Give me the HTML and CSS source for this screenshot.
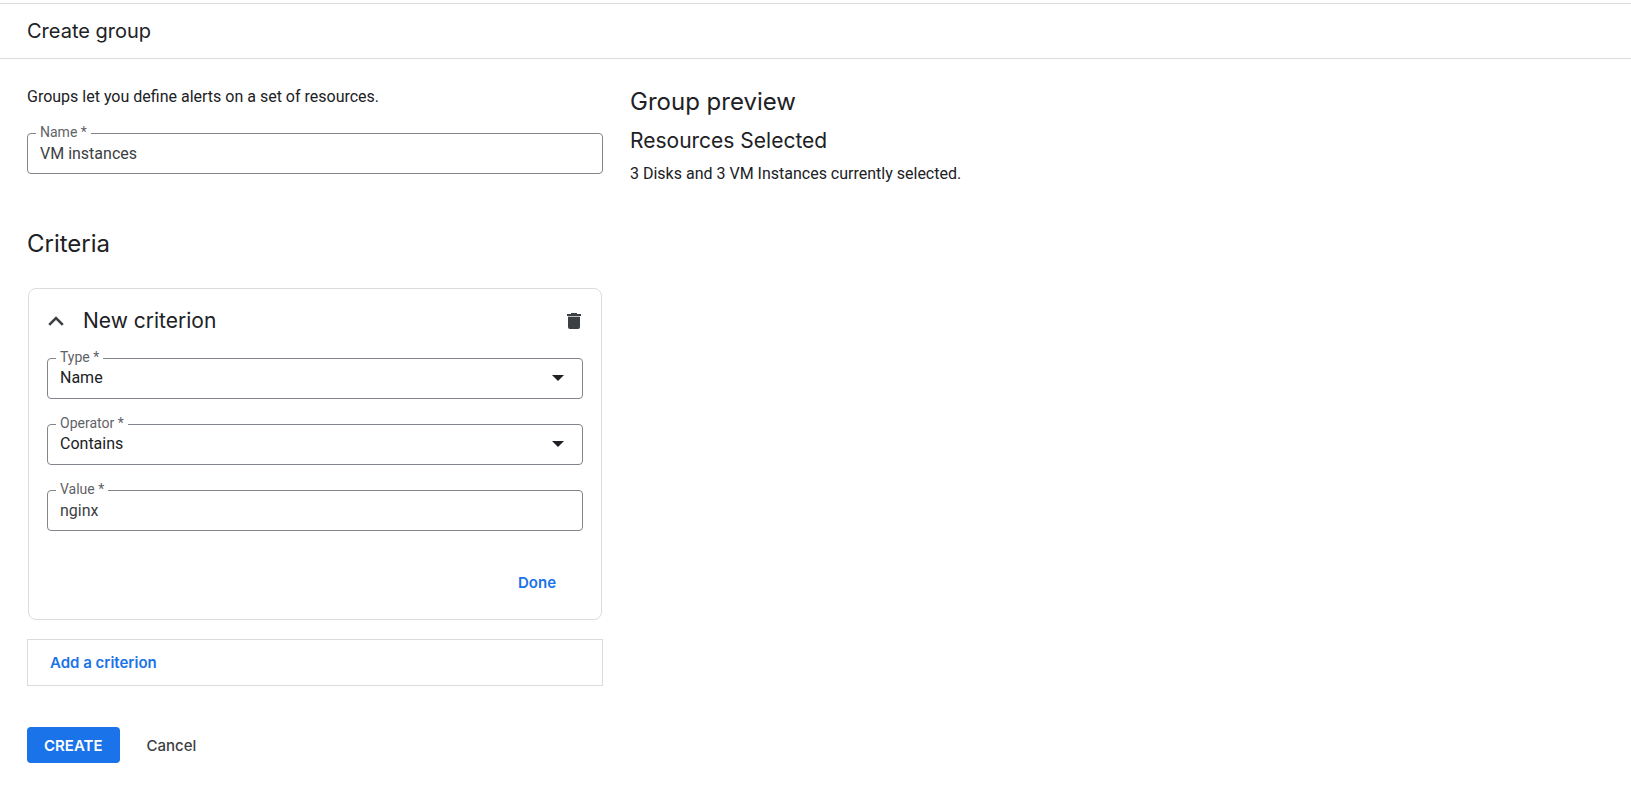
FILE: index.html
```html
<!DOCTYPE html>
<html lang="en">
<head>
<meta charset="utf-8">
<meta name="viewport" content="width=device-width, initial-scale=1">
<title>Create group</title>
<link rel="stylesheet" href="styles.css">
</head>
<body>
<header class="page-header">
  <h1 class="page-title">Create group</h1>
</header>
<main class="layout">
  <form class="group-form">
    <p class="text">Groups let you define alerts on a set of resources.</p>
    <div class="field field-name">
      <label class="field-label" for="name">Name *</label>
      <input class="field-control" id="name" type="text" value="VM instances">
    </div>
    <h2 class="heading heading-criteria">Criteria</h2>
    <section class="card">
      <div class="card-header">
        <button class="icon-button" type="button" aria-label="Collapse">
          <svg width="18" height="18" viewBox="0 0 18 18"><path d="M2.2 12.8 9 6l6.8 6.8" fill="none" stroke="#3c4043" stroke-width="2.6"/></svg>
        </button>
        <h3 class="subheading card-title">New criterion</h3>
        <button class="icon-button" type="button" aria-label="Delete">
          <svg width="18" height="18" viewBox="0 0 18 18"><path d="M6 1h6v1h4v2H2V2h4z" fill="#3c4043"/><path d="M3 4h12v1H3z" fill="#bdc1c6"/><path d="M3 5h12v10a2 2 0 0 1-2 2H5a2 2 0 0 1-2-2z" fill="#3c4043"/></svg>
        </button>
      </div>
      <div class="fields">
        <div class="field">
          <label class="field-label" for="type">Type *</label>
          <select class="field-control field-select" id="type"><option>Name</option></select>
          <svg class="field-arrow" width="12" height="6" viewBox="0 0 12 6"><path d="M0 0h12L6 6z" fill="#202124"/></svg>
        </div>
        <div class="field">
          <label class="field-label" for="operator">Operator *</label>
          <select class="field-control field-select" id="operator"><option>Contains</option></select>
          <svg class="field-arrow" width="12" height="6" viewBox="0 0 12 6"><path d="M0 0h12L6 6z" fill="#202124"/></svg>
        </div>
        <div class="field">
          <label class="field-label" for="value">Value *</label>
          <input class="field-control" id="value" type="text" value="nginx">
        </div>
      </div>
      <div class="card-actions">
        <button class="button button-link" type="button">Done</button>
      </div>
    </section>
    <button class="button add-button" type="button">Add a criterion</button>
    <div class="form-actions">
      <button class="button button-primary" type="submit">CREATE</button>
      <button class="button button-plain" type="button">Cancel</button>
    </div>
  </form>
  <aside class="preview">
    <h2 class="heading">Group preview</h2>
    <h3 class="subheading preview-subheading">Resources Selected</h3>
    <p class="text">3 Disks and 3 VM Instances currently selected.</p>
  </aside>
</main>
</body>
</html>
```
FILE: styles.css
```css
* {
  box-sizing: border-box;
}

body {
  margin: 0;
  background: #fff;
  color: #202124;
  font-family: Roboto, "Liberation Sans", sans-serif;
  font-size: 16px;
  line-height: 24px;
}

h1, h2, h3, p {
  margin: 0;
  font-weight: 400;
}

.page-header {
  margin-top: 3px;
  padding: 13px 27px;
  border-top: 1px solid #dadce0;
  border-bottom: 1px solid #dadce0;
}

.page-title,
.heading,
.subheading,
.button {
  font-family: Inter, "Open Sans", sans-serif;
}

.page-title {
  font-size: 20px;
  line-height: 28px;
}

.heading {
  font-size: 24px;
  line-height: 34px;
}

.subheading {
  font-size: 21px;
  line-height: 32px;
}

.layout {
  display: grid;
  grid-template-columns: minmax(0, 576px) minmax(0, 1fr);
  gap: 27px;
  padding: 26px 27px;
}

.field {
  position: relative;
}

.field-name {
  margin-top: 24px;
}

.field-label {
  position: absolute;
  top: -9px;
  left: 9px;
  padding: 0 4px;
  background: #fff;
  color: #5f6368;
  font-size: 14px;
  line-height: 16px;
}

.field-control {
  display: block;
  width: 100%;
  height: 41px;
  padding: 0 12px 1px;
  border: 1px solid #80868b;
  border-radius: 4px;
  background: #fff;
  color: #3c4043;
  font: inherit;
}

.field-select {
  padding-bottom: 2px;
  appearance: none;
  color: #202124;
}

.field-arrow {
  position: absolute;
  top: 17px;
  right: 19px;
  pointer-events: none;
}

.heading-criteria {
  margin-top: 53px;
}

.card {
  margin: 27px 1px 0;
  padding: 16px 18px 19px;
  border: 1px solid #dadce0;
  border-radius: 8px;
}

.card-header {
  display: flex;
  align-items: center;
}

.card-title {
  flex: 1;
  margin-left: 18px;
}

.icon-button {
  display: flex;
  padding: 0;
  border: 0;
  background: none;
}

.fields {
  display: grid;
  gap: 25px;
  margin-top: 21px;
}

.card-actions {
  display: flex;
  justify-content: flex-end;
  margin-top: 33px;
}

.button {
  height: 36px;
  padding: 0 27px;
  border: 0;
  border-radius: 4px;
  background: none;
  font-size: 15px;
  font-weight: 600;
}

.button-link,
.add-button {
  color: #1a73e8;
}

.add-button {
  display: block;
  width: 100%;
  height: 47px;
  margin-top: 19px;
  padding: 0 22px;
  border: 1px solid #dadce0;
  border-radius: 0;
  text-align: left;
}

.form-actions {
  display: flex;
  margin-top: 41px;
}

.button-primary {
  padding: 0 17px;
  background: #1a73e8;
  color: #fff;
}

.button-plain {
  color: #3c4043;
  font-weight: 500;
}

.preview-subheading {
  margin-top: 6px;
  margin-bottom: 5px;
}
```
